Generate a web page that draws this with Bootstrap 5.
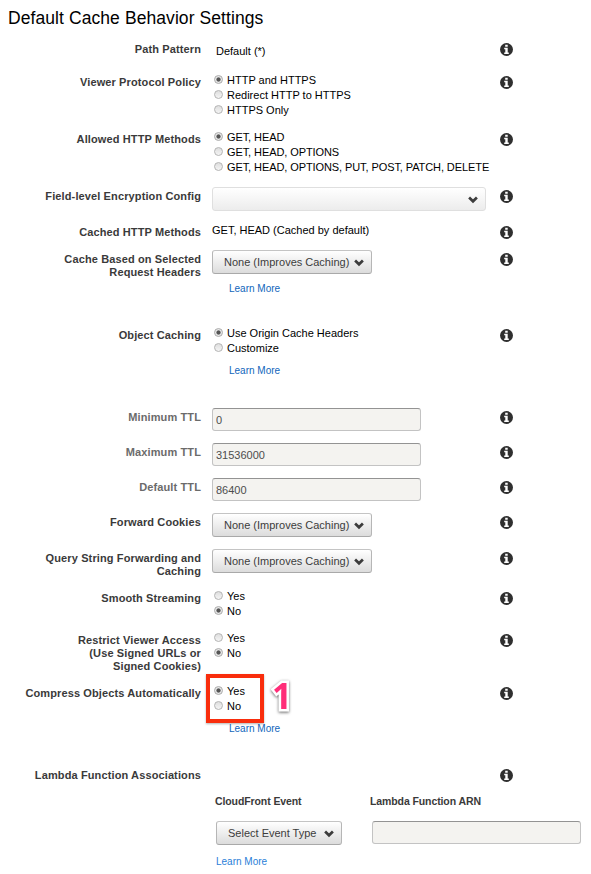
<!DOCTYPE html>
<html lang="en">
<head>
<meta charset="utf-8">
<meta name="viewport" content="width=device-width, initial-scale=1">
<title>Default Cache Behavior Settings</title>
<link href="https://cdn.jsdelivr.net/npm/bootstrap@5.3.0/dist/css/bootstrap.min.css" rel="stylesheet">
<style>
body{font-family:"Liberation Sans",Arial,sans-serif;font-size:11px;line-height:15px;color:#000;background:#fff;overflow:hidden}
.page{width:591px;height:874px;overflow:hidden}
.page-title{font-size:17.5px;line-height:20px;padding:8px 0 0 8px;height:40px;margin:0;font-weight:400;letter-spacing:.08px;white-space:nowrap}
.setting{flex:none}
.h29{height:29px}.h27{height:27px}.h33{height:33px}.h35{height:35px}.h36{height:36px}.h40{height:40px}.h42{height:42px}.h53{height:53px}.h57{height:57px}.h76{height:76px}.h82{height:82px}
.name{width:201px;padding-top:3px;line-height:13px;font-weight:700;color:#3a3a3a;letter-spacing:.12px;flex:none}
.name.dim{color:#6b6b6b}
.field{width:299px;padding-left:11px;flex:none;white-space:nowrap}
.info{width:13px;height:13px;margin-top:3px;flex:none}
.radio-line{height:15px;padding-left:2px}
.radio-line input{appearance:none;width:9px;height:9px;margin:0 4px 2px 0;border:1px solid #b4b4b4;border-radius:50%;background:linear-gradient(#dedede,#f4f4f4);flex:none}
.radio-line input:checked{border-color:#aaa;background:radial-gradient(circle,#555 0 1.7px,#e8e8e8 2.5px)}
.tight{letter-spacing:-.09px}
.pick{height:24px;padding:0 7px 0 11px;border:1px solid #b9b9b9;border-color:#c4c4c4 #b6b6b6 #a9a9a9;border-radius:3px;background:linear-gradient(#fff,#dcdcdc);color:#3c3c3c;font-size:11px;line-height:22px}
.pick svg{width:10px;height:8px;margin-top:1px}
.pick:disabled{opacity:1;border-color:#dfdfdf;background:linear-gradient(#fff,#ececec)}
.w160{width:160px}.w274{width:274px}.w126{width:126px}
.entry{width:209px;height:23px;min-height:0;padding:1px 3px 1px;border:1px solid #c3c3c3;border-top-color:#939393;border-radius:3px;font-size:11px;line-height:18px}
.entry:disabled{background:#f4f3f0;color:#4d4d4d}
.more{font-size:10px;line-height:12px;color:#1166bb;text-decoration:none;display:block;margin-left:17px}
.gap-a{margin-top:9px}.gap-c{margin-top:9px}.gap-d{margin-top:11px;color:#2a80d8}
.callout{left:-6px;top:-10px;width:58px;height:49px;border:4px solid #f92d0c;box-shadow:0 1px 2px rgba(0,0,0,.3)}
.step{left:60px;top:-8px;font:700 35px/39px "Open Sans",sans-serif;color:#ff2d78;-webkit-text-stroke:5px #fff;paint-order:stroke fill;filter:drop-shadow(0 1px 1.5px rgba(0,0,0,.6))}
.assoc{padding:0 0 0 216px}
.assoc-head{height:26px;font-size:10.5px;font-weight:700;color:#3a3a3a;letter-spacing:-.1px;line-height:13px}
.head-event{width:155px;margin-left:-1px}
.arn{margin-left:30px}
</style>
<script src="https://cdn.jsdelivr.net/npm/bootstrap@5.3.0/dist/js/bootstrap.bundle.min.js"></script>
</head>
<body>
<svg class="d-none">
<symbol id="i" viewBox="0 0 13 13"><circle cx="6.5" cy="6.5" r="6.5" fill="#2f2f2f"/><path fill="#fff" d="M5.2 1.7h2.5v2H5.2zM4.2 4.7h3.5v4.8h1.1v1.6H4.2V9.5h1.1V6.2H4.2z"/></symbol>
<symbol id="v" viewBox="0 0 10 8"><path d="M1.1 1.6 5 5.3 8.9 1.6" fill="none" stroke="#3c3c3c" stroke-width="2.7"/></symbol>
</svg>
<main class="page d-flex flex-column">
<h1 class="page-title">Default Cache Behavior Settings</h1>

<div class="setting d-flex h33"><div class="name text-end">Path Pattern</div><div class="field"><div class="ps-1 pt-1">Default (*)</div></div><svg class="info"><use href="#i"/></svg></div>

<div class="setting d-flex h57"><div class="name text-end">Viewer Protocol Policy</div><div class="field">
<label class="radio-line d-flex align-items-center"><input type="radio" name="vpp" checked>HTTP and HTTPS</label>
<label class="radio-line d-flex align-items-center"><input type="radio" name="vpp">Redirect HTTP to HTTPS</label>
<label class="radio-line d-flex align-items-center"><input type="radio" name="vpp">HTTPS Only</label></div><svg class="info"><use href="#i"/></svg></div>

<div class="setting d-flex h57"><div class="name text-end">Allowed HTTP Methods</div><div class="field tight">
<label class="radio-line d-flex align-items-center"><input type="radio" name="ahm" checked>GET, HEAD</label>
<label class="radio-line d-flex align-items-center"><input type="radio" name="ahm">GET, HEAD, OPTIONS</label>
<label class="radio-line d-flex align-items-center"><input type="radio" name="ahm">GET, HEAD, OPTIONS, PUT, POST, PATCH, DELETE</label></div><svg class="info"><use href="#i"/></svg></div>

<div class="setting d-flex h36"><div class="name text-end">Field-level Encryption Config</div><div class="field"><button class="pick w274 d-flex align-items-center justify-content-end" disabled aria-label="Field-level Encryption Config"><svg><use href="#v"/></svg></button></div><svg class="info"><use href="#i"/></svg></div>

<div class="setting d-flex h27"><div class="name text-end">Cached HTTP Methods</div><div class="field">GET, HEAD (Cached by default)</div><svg class="info"><use href="#i"/></svg></div>

<div class="setting d-flex h76"><div class="name text-end">Cache Based on Selected<br>Request Headers</div><div class="field"><button class="pick w160 d-flex align-items-center justify-content-between">None (Improves Caching)<svg><use href="#v"/></svg></button><a class="more gap-a" href="#">Learn More</a></div><svg class="info"><use href="#i"/></svg></div>

<div class="setting d-flex h82"><div class="name text-end">Object Caching</div><div class="field">
<label class="radio-line d-flex align-items-center"><input type="radio" name="oc" checked>Use Origin Cache Headers</label>
<label class="radio-line d-flex align-items-center"><input type="radio" name="oc">Customize</label><a class="more gap-c" href="#">Learn More</a></div><svg class="info"><use href="#i"/></svg></div>

<div class="setting d-flex h35"><div class="name dim text-end">Minimum TTL</div><div class="field"><input class="entry form-control" value="0" disabled></div><svg class="info"><use href="#i"/></svg></div>
<div class="setting d-flex h35"><div class="name dim text-end">Maximum TTL</div><div class="field"><input class="entry form-control" value="31536000" disabled></div><svg class="info"><use href="#i"/></svg></div>
<div class="setting d-flex h35"><div class="name dim text-end">Default TTL</div><div class="field"><input class="entry form-control" value="86400" disabled></div><svg class="info"><use href="#i"/></svg></div>

<div class="setting d-flex h36"><div class="name text-end">Forward Cookies</div><div class="field"><button class="pick w160 d-flex align-items-center justify-content-between">None (Improves Caching)<svg><use href="#v"/></svg></button></div><svg class="info"><use href="#i"/></svg></div>

<div class="setting d-flex h40"><div class="name text-end">Query String Forwarding and<br>Caching</div><div class="field"><button class="pick w160 d-flex align-items-center justify-content-between">None (Improves Caching)<svg><use href="#v"/></svg></button></div><svg class="info"><use href="#i"/></svg></div>

<div class="setting d-flex h42"><div class="name text-end">Smooth Streaming</div><div class="field">
<label class="radio-line d-flex align-items-center"><input type="radio" name="ss">Yes</label>
<label class="radio-line d-flex align-items-center"><input type="radio" name="ss" checked>No</label></div><svg class="info"><use href="#i"/></svg></div>

<div class="setting d-flex h53"><div class="name text-end">Restrict Viewer Access<br>(Use Signed URLs or<br>Signed Cookies)</div><div class="field">
<label class="radio-line d-flex align-items-center"><input type="radio" name="rv">Yes</label>
<label class="radio-line d-flex align-items-center"><input type="radio" name="rv" checked>No</label></div><svg class="info"><use href="#i"/></svg></div>

<div class="setting d-flex h82"><div class="name text-end">Compress Objects Automatically</div><div class="field"><div class="position-relative">
<label class="radio-line d-flex align-items-center"><input type="radio" name="co" checked>Yes</label>
<label class="radio-line d-flex align-items-center"><input type="radio" name="co">No</label>
<a class="more gap-c" href="#">Learn More</a>
<div class="callout position-absolute"></div><div class="step position-absolute">1</div></div></div><svg class="info"><use href="#i"/></svg></div>

<div class="setting d-flex h29"><div class="name text-end">Lambda Function Associations</div><div class="field"></div><svg class="info"><use href="#i"/></svg></div>

<div class="assoc">
<div class="assoc-head d-flex"><div class="head-event">CloudFront Event</div><div>Lambda Function ARN</div></div>
<div class="d-flex"><button class="pick w126 d-flex align-items-center justify-content-between">Select Event Type<svg><use href="#v"/></svg></button><input class="entry arn form-control" disabled aria-label="Lambda Function ARN"></div>
<a class="more ms-0 gap-d" href="#">Learn More</a>
</div>
</main>
</body>
</html>
